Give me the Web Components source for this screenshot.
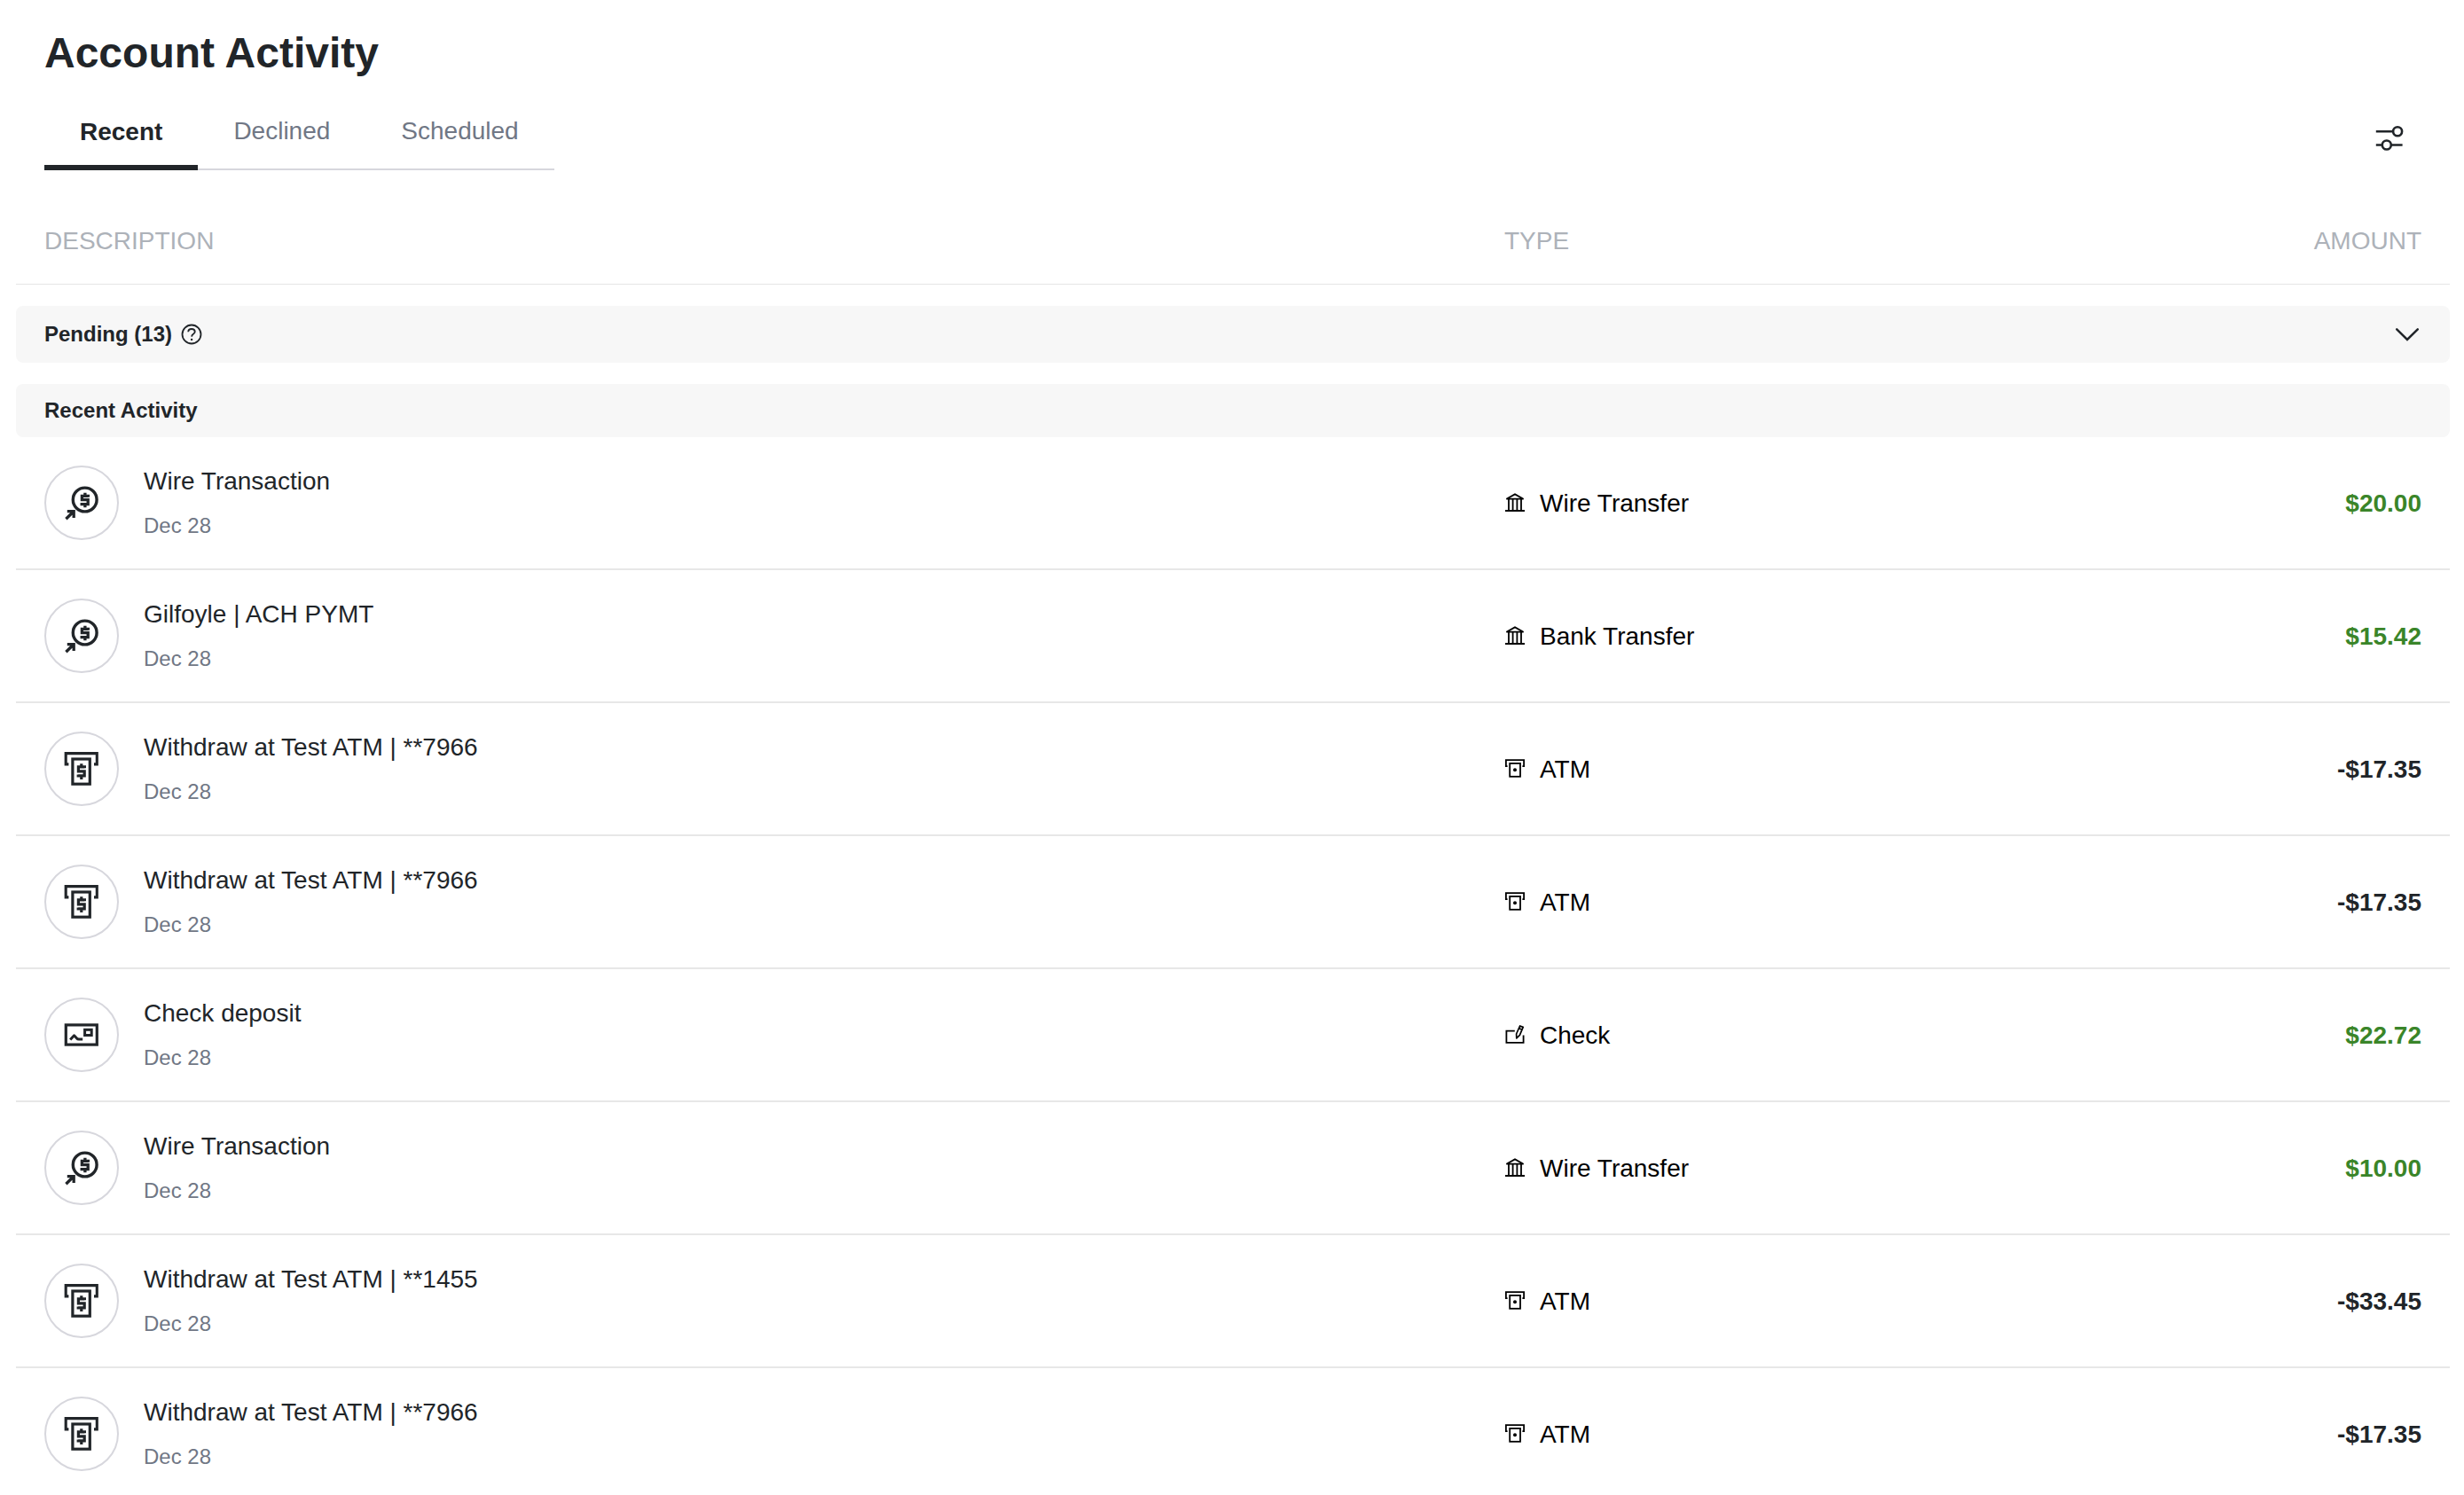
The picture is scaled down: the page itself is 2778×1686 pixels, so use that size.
<!DOCTYPE html>
<html lang="en">
<head>
<meta charset="utf-8">
<title>Account Activity</title>
<style>
html,body{margin:0;padding:0;background:#fff}
body{font-family:"Liberation Sans",Arial,Helvetica,sans-serif;color:#212529;width:2778px;height:1686px;overflow:hidden}
</style>
</head>
<body>
<account-activity>
  <activity-tabs slot="tabs">
    <activity-tab active>Recent</activity-tab>
    <activity-tab>Declined</activity-tab>
    <activity-tab>Scheduled</activity-tab>
  </activity-tabs>
  <column-header></column-header>
  <section-bar collapsible>Pending (13)</section-bar>
  <section-bar>Recent Activity</section-bar>
  <activity-row icon="wire" kind="bank" type="Wire Transfer" amount="$20.00">Wire Transaction</activity-row>
  <activity-row icon="wire" kind="bank" type="Bank Transfer" amount="$15.42">Gilfoyle | ACH PYMT</activity-row>
  <activity-row icon="atm" kind="atm" type="ATM" amount="-$17.35">Withdraw at Test ATM | **7966</activity-row>
  <activity-row icon="atm" kind="atm" type="ATM" amount="-$17.35">Withdraw at Test ATM | **7966</activity-row>
  <activity-row icon="check" kind="check" type="Check" amount="$22.72">Check deposit</activity-row>
  <activity-row icon="wire" kind="bank" type="Wire Transfer" amount="$10.00">Wire Transaction</activity-row>
  <activity-row icon="atm" kind="atm" type="ATM" amount="-$33.45">Withdraw at Test ATM | **1455</activity-row>
  <activity-row icon="atm" kind="atm" type="ATM" amount="-$17.35">Withdraw at Test ATM | **7966</activity-row>
</account-activity>
<script>
const BADGES = {
  wire: `<circle cx="45.7" cy="38.5" r="13.4" stroke-width="3.4"/>
    <path stroke-width="3.3" d="M49.4 35.8V34.4H42.4V38.7H49.2V43.6H42.2V42.1M45.9 30.8V34M45.9 44V47.2"/>
    <path stroke-width="3.3" d="M24.4 60.2L33 51.8M25.8 51.6H33.2V59"/>`,
  atm: `<path stroke-width="3.1" d="M27.4 36.9H24.2V24.6H59.3V36.9H56"/>
    <rect stroke-width="3.2" x="31.9" y="31" width="19.4" height="28.2"/>
    <path stroke-width="3.2" d="M45.4 41.2V39.8H38.4V44.8H45.2V49.9H38.2V48.4M41.8 36.2V40M41.8 50V54"/>`,
  check: `<rect stroke-width="3.2" x="24.3" y="30.9" width="35" height="22.2"/>
    <rect stroke-width="3" x="45.6" y="36.3" width="7.6" height="6.2"/>
    <path stroke-width="3" stroke-linejoin="round" d="M29.2 47.6L33.6 42.8L36.6 46Q37.6 47.2 39.6 46.9H43.2"/>`
};
const KINDS = {
  bank: `<path d="M1.4 6.7L11 1.4L20.6 6.7ZM0 20H22M4 7V20M8.6 7V20M13.4 7V20M18 7V20"/>`,
  atm: `<path d="M2.6 8.2H.9V1.2H21.1V8.2H19.4"/><rect x="5.2" y="4.9" width="11.8" height="14.9"/><circle cx="11" cy="12.3" r="2" fill="#000" stroke="none"/>`,
  check: `<path d="M10.8 6.6H1.4V19.8H20.6V11.6"/><path stroke-width="1.7" stroke-linejoin="round" d="M12.8 14.8L12.6 10L16.6 1L20.2 2.4L16.4 11.4ZM15.6 3.8L19 5.2"/>`
};
class Base extends HTMLElement {
  connectedCallback() {
    this.attachShadow({ mode: 'open' }).innerHTML = this.render();
  }
}
customElements.define('account-activity', class extends Base {
  render() { return `<style>
    :host{display:flex;flex-direction:column;padding:0 16px 0 18px}
    h1{margin:0;padding:32px 32px 0;font-size:48px;line-height:56px;font-weight:700}
    .bar{display:flex;justify-content:space-between;align-items:flex-start;padding:32px 50px 0 32px;height:104px;box-sizing:border-box}
    svg{display:block;margin-top:20px;width:36px;height:32px;fill:none;stroke:#212529;stroke-width:2.6}
    </style><h1>Account Activity</h1>
    <div class="bar"><slot name="tabs"></slot>
    <svg viewBox="0 0 36 32"><circle cx="27.1" cy="8.3" r="5"/><path d="M2.8 8.3H22M2.8 23.5H9.6M20 23.5H32.6"/><circle cx="14.8" cy="23.5" r="5"/></svg></div>
    <slot></slot>`; }
});
customElements.define('activity-tabs', class extends Base {
  render() { return `<style>:host{display:flex;height:72px}</style><slot></slot>`; }
});
customElements.define('activity-tab', class extends Base {
  render() { return `<style>
    :host{display:block;box-sizing:border-box;height:72px;padding:12px 40px 0;font-size:28px;line-height:32px;color:#707785;border-bottom:2px solid #d7d7dd}
    :host([active]){padding-top:13px;font-weight:700;color:#212529;border-bottom:6px solid #212529}
    </style><slot></slot>`; }
});
customElements.define('column-header', class extends Base {
  render() { return `<style>
    :host{display:grid;grid-template-columns:1646px 1fr auto;padding:0 32px;height:129px;box-sizing:border-box;padding-top:64px;border-bottom:1px solid #e6e6e6;font-size:28px;line-height:32px;color:#adb2b9;margin-bottom:24px}
    </style><span>DESCRIPTION</span><span>TYPE</span><span>AMOUNT</span>`; }
});
customElements.define('section-bar', class extends Base {
  render() {
    const c = this.hasAttribute('collapsible');
    return `<style>
    :host{display:flex;align-items:center;height:60px;padding:0 32px;border-radius:8px;background:#f7f7f7;font-size:24px;line-height:28px;font-weight:700}
    :host([collapsible]){height:64px;margin-bottom:24px}
    svg{display:block;fill:none;stroke:#212529}
    .help{width:24px;height:24px;margin-left:10px;stroke-width:1.8}
    .chev{width:32px;height:20px;margin-left:auto;stroke-width:2.5;stroke-linecap:round}
    </style><slot></slot>${c ? `
    <svg class="help" viewBox="0 0 24 24"><circle cx="12" cy="12" r="10.5"/><path d="M8.2 9.3Q8.4 6 12 6T15.8 9.1Q15.8 10.6 13.9 11.8Q12.2 12.9 12.1 14.6"/><circle cx="12.1" cy="17.9" r="1.2" fill="#212529" stroke="none"/></svg>
    <svg class="chev" viewBox="0 0 32 20"><path d="M4.2 4.3L16 16L27.8 4.3"/></svg>` : ''}`;
  }
});
customElements.define('activity-row', class extends Base {
  render() {
    const a = this.getAttribute('amount');
    return `<style>
    :host{display:grid;grid-template-columns:1647px 1fr auto;align-items:center;height:150px;flex:none;box-sizing:border-box;padding:0 32px;border-bottom:2px solid #e7e7e7;font-size:28px;line-height:32px}
    .desc{display:flex;align-items:center;gap:28px}
    .badge{box-sizing:border-box;width:84px;height:84px;border:2px solid #d7d7dd;border-radius:50%}
    svg{display:block;fill:none;overflow:visible}
    .badge svg{width:84px;height:84px;margin:-2px;stroke:#212529}
    .date{font-size:24px;line-height:28px;color:#707785;margin-top:20px}
    .type{display:flex;align-items:center;gap:17px;color:#000}
    .type svg{width:22px;height:22px;stroke:#000;stroke-width:1.8}
    .type span,.amt{padding-top:2px}
    .amt{font-weight:700;color:${a[0] === '-' ? '#212529' : '#3a8529'}}
    </style>
    <div class="desc"><div class="badge"><svg viewBox="0 0 84 84">${BADGES[this.getAttribute('icon')]}</svg></div>
    <div><div class="name"><slot></slot></div><div class="date">Dec 28</div></div></div>
    <div class="type"><svg viewBox="0 0 22 22">${KINDS[this.getAttribute('kind')]}</svg><span>${this.getAttribute('type')}</span></div>
    <div class="amt">${a}</div>`;
  }
});
</script>
</body>
</html>
